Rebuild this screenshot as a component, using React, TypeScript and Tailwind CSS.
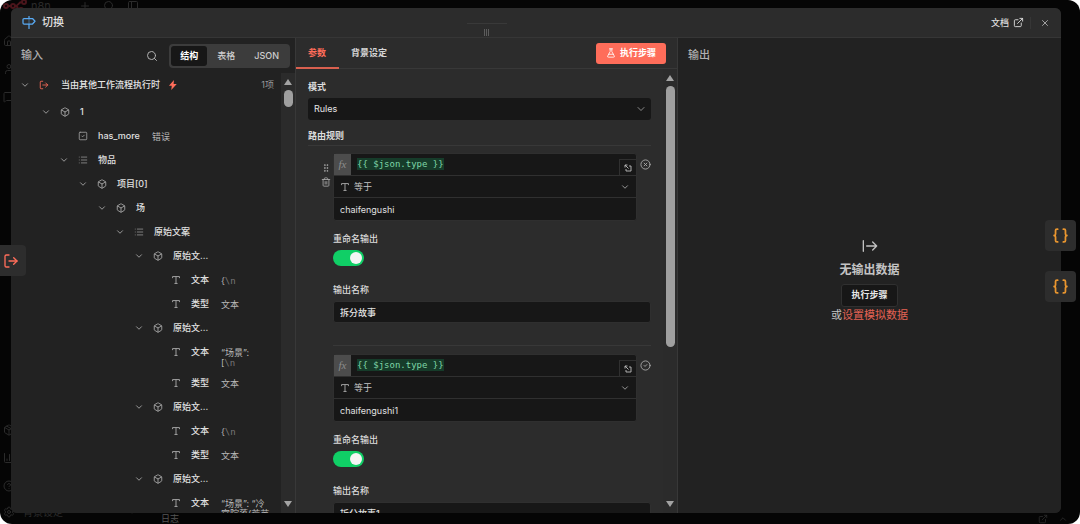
import { useState } from "react";
import type { ReactNode } from "react";
import {
  Box,
  Braces,
  ChartColumn,
  ChevronDown,
  ChevronUp,
  CircleCheck,
  CircleHelp,
  CircleX,
  ExternalLink,
  FlaskConical,
  GripVertical,
  House,
  List,
  LogOut,
  MessageSquare,
  Package,
  PanelLeft,
  Plus,
  Search,
  Settings,
  SquareCheck,
  Trash2,
  User,
  X,
} from "lucide-react";

type Kind = "object" | "list" | "bool" | "string";

type TreeRow = {
  level: number;
  kind: Kind;
  label: string;
  value?: ReactNode;
};

const escaped = <span className="font-['DejaVu_Sans_Mono'] text-[#777]">\n</span>;

const rows: TreeRow[] = [
  { level: 1, kind: "object", label: "1" },
  { level: 2, kind: "bool", label: "has_more", value: "错误" },
  { level: 2, kind: "list", label: "物品" },
  { level: 3, kind: "object", label: "项目[0]" },
  { level: 4, kind: "object", label: "场" },
  { level: 5, kind: "list", label: "原始文案" },
  { level: 6, kind: "object", label: "原始文..." },
  { level: 7, kind: "string", label: "文本", value: <>{"{"}{escaped}</> },
  { level: 7, kind: "string", label: "类型", value: "文本" },
  { level: 6, kind: "object", label: "原始文..." },
  { level: 7, kind: "string", label: "文本", value: <>“场景”:<br />[{escaped}</> },
  { level: 7, kind: "string", label: "类型", value: "文本" },
  { level: 6, kind: "object", label: "原始文..." },
  { level: 7, kind: "string", label: "文本", value: <>{"{"}{escaped}</> },
  { level: 7, kind: "string", label: "类型", value: "文本" },
  { level: 6, kind: "object", label: "原始文..." },
  { level: 7, kind: "string", label: "文本", value: <>“场景”: “冷<br />宫院落(荒芜</> },
];

const indents = [
  "pl-[6px]",
  "pl-[27px]",
  "pl-[45px]",
  "pl-[64px]",
  "pl-[83px]",
  "pl-[101px]",
  "pl-[120px]",
  "pl-[138px]",
];

function SignIcon() {
  return (
    <svg viewBox="0 0 28 26" className="h-[13px] w-[14px]" fill="none" stroke="#58a9f2" strokeWidth="2.5" strokeLinejoin="round" strokeLinecap="round">
      <path d="M14 1v4M14 16v9M4 5h17l5 5.500-5 5.500H4a2 2 0 0 1-2-2V7a2 2 0 0 1 2-2z" />
      <path d="M14 5v11" strokeWidth="1" />
    </svg>
  );
}

function TextIcon() {
  return (
    <svg viewBox="0 0 16 16" className="size-2.5 text-[#b0b0b0]" fill="none" stroke="currentColor" strokeWidth="1.4">
      <path d="M2.500 5V2.500h11V5M8 2.500v11M5.500 13.500h5" />
    </svg>
  );
}

function BoltIcon() {
  return (
    <svg viewBox="0 0 16 16" className="size-2.5" fill="#ff6d5a">
      <path d="M9.500 0 1.500 9h4.500l-.8 7L14 6.500H9z" />
    </svg>
  );
}

function OutIcon() {
  return (
    <svg viewBox="0 0 24 24" className="size-4" fill="none" stroke="#c2c2c2" strokeWidth="2" strokeLinecap="round" strokeLinejoin="round">
      <path d="M2 4v16M7 12h15M16 6l6 6-6 6" />
    </svg>
  );
}

function PopIcon() {
  return (
    <svg viewBox="0 0 16 16" className="size-2" fill="none" stroke="#c0c0c0" strokeWidth="1.800">
      <path d="M2 7V2h5M2 2l7 7M10 4h4v10H4v-4" />
    </svg>
  );
}

function KindIcon({ kind }: { kind: Kind }) {
  if (kind === "object") return <Box className="size-2.5 text-[#b0b0b0]" />;
  if (kind === "list") return <List className="size-2.5 text-[#909090]" />;
  if (kind === "bool") return <SquareCheck className="size-2.5 text-[#a0a0a0]" />;
  return <TextIcon />;
}

function Scrollbar({ thumb }: { thumb: string }) {
  return (
    <div className="flex w-[14px] shrink-0 flex-col items-center bg-[#2b2b2b] pt-[6px] pb-[6px]">
      <svg viewBox="0 0 8 6" className="h-[6px] w-2" fill="#a3a3a3">
        <path d="M4 0 8 6H0z" />
      </svg>
      <div className="mt-[5px] min-h-0 w-full flex-1 pr-[2px] pl-[3px]">
        <div className={`w-full rounded-full bg-[#9f9f9f] ${thumb}`} />
      </div>
      <svg viewBox="0 0 8 6" className="h-[6px] w-2" fill="#a3a3a3">
        <path d="M4 6 0 0h8z" />
      </svg>
    </div>
  );
}

function Node({ row }: { row: TreeRow }) {
  const leaf = row.kind === "string" || row.kind === "bool";
  return (
    <div className={`flex min-h-6 items-start ${indents[row.level]}`}>
      {!leaf && (
        <button aria-label="折叠" className="flex h-6 w-4 items-center justify-center">
          <ChevronDown className="size-2.5 text-[#b0b0b0]" />
        </button>
      )}
      <span className={`flex h-6 w-[14px] items-center justify-center ${leaf ? "ml-5" : "ml-1"}`}>
        <KindIcon kind={row.kind} />
      </span>
      <span className="ml-2 h-6 shrink-0 leading-6 font-medium text-[#e0e0e0]">{row.label}</span>
      {row.value && (
        <span className="ml-3 pt-2 pb-[3px] leading-[10px] whitespace-nowrap text-[#b8b8b8]">{row.value}</span>
      )}
    </div>
  );
}

function InputPanel() {
  const [view, setView] = useState("结构");
  return (
    <section className="flex min-h-0 min-w-0 flex-col bg-[#222]">
      <header className="flex h-[35px] shrink-0 items-center pr-[5px] pl-[10px]">
        <h2 className="text-[11px] font-medium text-[#b0b0b0]">输入</h2>
        <button aria-label="搜索" className="mr-[11px] ml-auto">
          <Search className="size-3 text-[#b0b0b0]" />
        </button>
        <div className="flex gap-px rounded bg-[#3c3c3c] p-0.5">
          {["结构", "表格", "JSON"].map((name) => (
            <button
              key={name}
              onClick={() => setView(name)}
              className={`h-5 rounded-[3px] px-[9px] ${view === name ? "bg-[#171717] font-bold text-white" : "font-medium text-[#cfcfcf]"}`}
            >
              {name}
            </button>
          ))}
        </div>
      </header>
      <div className="flex min-h-0 flex-1">
        <div className="min-w-0 flex-1 overflow-hidden">
          <div className="mb-1 flex h-[23px] items-center pr-[7px] pl-[6px]">
            <button aria-label="折叠" className="flex w-4 justify-center">
              <ChevronDown className="size-2.5 text-[#b0b0b0]" />
            </button>
            <LogOut className="ml-1.5 size-2.5 text-[#ff6d5a]" />
            <span className="mr-2 ml-3 font-medium text-[#e6e6e6]">当由其他工作流程执行时</span>
            <BoltIcon />
            <span className="ml-auto text-[#999]">1项</span>
          </div>
          {rows.map((row, i) => (
            <Node key={i} row={row} />
          ))}
        </div>
        <Scrollbar thumb="h-[17px]" />
      </div>
    </section>
  );
}

type RuleProps = { id: string; value: string; name: string; valid?: boolean; tools?: boolean };

function Rule({ id, value, name, valid, tools }: RuleProps) {
  const [rename, setRename] = useState(true);
  const Status = valid ? CircleCheck : CircleX;
  return (
    <div className="flex">
      <div className="flex w-[25px] shrink-0 flex-col items-center gap-1 pt-[10px] pl-2.5 text-[#a8a8a8]">
        {tools && (
          <>
            <GripVertical className="size-2.5" />
            <button aria-label="删除">
              <Trash2 className="size-2.5" />
            </button>
          </>
        )}
      </div>
      <div className="min-w-0 flex-1">
        <div className="flex">
          <div className="min-w-0 flex-1 rounded-[3px] border border-[#2f2f2f] bg-[#171717]">
            <div className="flex h-[22px] border-b border-[#303030]">
              <span className="flex w-[17px] items-center justify-center bg-[#4c4c4c] font-['Liberation_Serif'] text-[11px] text-[#8c8c8c] italic">fx</span>
              <div className="flex-1 pl-1.5 font-['DejaVu_Sans_Mono'] leading-[20px] text-[#7fd6a8]">
                <span className="bg-[#163c2a] py-px">{"{{ $json.type }}"}</span>
              </div>
              <button aria-label="展开" className="flex h-4 w-[17px] items-center justify-center self-end border-t border-l border-[#303030]">
                <PopIcon />
              </button>
            </div>
            <label className="flex h-[22px] items-center border-b border-[#303030] px-1.5">
              <TextIcon />
              <select aria-label="条件" className="ml-1 min-w-0 flex-1 appearance-none text-[#c4c4c4]">
                <option>等于</option>
              </select>
              <ChevronDown className="size-2.5 text-[#b0b0b0]" />
            </label>
            <input aria-label="值" defaultValue={value} className="block h-[22px] w-full px-1.5 text-[#e0e0e0]" />
          </div>
          <Status className="mt-1.5 ml-[3px] size-[11px] shrink-0 text-[#a8a8a8]" />
        </div>
        <label htmlFor={`${id}-rename`} className="mt-2.5 block h-4 leading-4 font-medium text-[#dcdcdc]">重命名输出</label>
        <input
          id={`${id}-rename`}
          type="checkbox"
          checked={rename}
          onChange={() => setRename(!rename)}
          className="mt-[3px] block h-4 w-[31px] appearance-none rounded-full bg-[#555] p-0.5 before:block before:size-3 before:rounded-full before:bg-[#f5f5f5] checked:bg-[#10cf66] checked:before:ml-auto"
        />
        <label htmlFor={`${id}-name`} className="mt-4 block h-4 leading-4 font-medium text-[#dcdcdc]">输出名称</label>
        <input
          id={`${id}-name`}
          defaultValue={name}
          className="mt-[3px] block h-[22px] w-full rounded-[3px] border border-[#2f2f2f] bg-[#171717] px-1.5 font-medium text-[#e0e0e0]"
        />
      </div>
    </div>
  );
}

function ParamsPanel() {
  return (
    <section className="relative flex min-h-0 min-w-0 flex-col border-x border-[#383838] bg-[#2c2c2c]">
      <div className="absolute -top-[15px] left-1/2 flex h-[15px] w-10 -translate-x-1/2 justify-center gap-px border-t border-[#393939] pt-[5px]">
        <span className="h-[7px] w-px bg-[#5c5c5c]" />
        <span className="h-[7px] w-px bg-[#5c5c5c]" />
        <span className="h-[7px] w-px bg-[#5c5c5c]" />
      </div>
      <header className="flex h-[31px] shrink-0 items-stretch border-b border-[#383838] pr-[11px]">
        <button className="-mb-px border-b-2 border-[#d9604f] pr-[13px] pl-3 font-bold text-[#ff6d5a]">参数</button>
        <button className="px-3 font-bold text-[#d6d6d6]">背景设定</button>
        <button className="ml-auto flex h-[21px] items-center gap-1 self-center rounded-[3px] bg-[#ff6d5a] px-2.5 font-bold text-white">
          <FlaskConical className="size-2.5" />
          执行步骤
        </button>
      </header>
      <div className="flex min-h-0 flex-1">
        <div className="min-w-0 flex-1 overflow-hidden pt-[10px] pr-3 pl-3">
          <label htmlFor="mode" className="block h-4 leading-4 font-bold text-[#dcdcdc]">模式</label>
          <div className="relative mt-[3px]">
            <select id="mode" className="block h-[22px] w-full appearance-none rounded-[3px] bg-[#171717] px-1.5 text-[#e6e6e6]">
              <option>Rules</option>
            </select>
            <ChevronDown strokeWidth={1.5} className="pointer-events-none absolute top-[5px] right-1 size-3 text-[#b0b0b0]" />
          </div>
          <h3 className="mt-2 h-[18px] border-b border-[#383838] leading-4 font-bold text-[#dcdcdc]">路由规则</h3>
          <div className="mt-[7px]">
            <Rule id="rule-1" value="chaifengushi" name="拆分故事" tools />
            <hr className="mt-[22px] mb-2 ml-[25px] border-[#383838]" />
            <Rule id="rule-2" value="chaifengushi1" name="拆分故事1" valid />
          </div>
        </div>
        <Scrollbar thumb="h-[63%]" />
      </div>
    </section>
  );
}

function OutputPanel() {
  return (
    <section className="flex min-h-0 min-w-0 flex-col bg-[#222]">
      <header className="flex h-[35px] shrink-0 items-center px-[10px]">
        <h2 className="text-[11px] font-medium text-[#b0b0b0]">输出</h2>
      </header>
      <div className="flex flex-1 flex-col items-center justify-center pb-[26px]">
        <OutIcon />
        <p className="mt-1.5 text-[12px] leading-5 font-bold text-[#c4c4c4]">无输出数据</p>
        <button className="mt-1 h-[23px] rounded-[3px] border border-[#303030] bg-[#171717] px-[9px] font-bold text-[#e6e6e6]">执行步骤</button>
        <p className="text-[11px] leading-4 text-[#c4c4c4]">
          或<a href="#mock" className="text-[#e56354]">设置模拟数据</a>
        </p>
      </div>
    </section>
  );
}

// Editor page dimmed behind the dialog
function Backdrop() {
  return (
    <div aria-hidden="true" className="absolute inset-0 flex flex-col justify-between text-[#2b2b2b]">
      <div className="flex h-[11px] items-center pl-[3px]">
        <svg viewBox="0 0 24 12" className="h-3 w-6" fill="none" stroke="#4a151b" strokeWidth="2">
          <circle cx="3" cy="6" r="2" />
          <circle cx="10" cy="6" r="2" />
          <circle cx="21" cy="2" r="2" />
          <circle cx="18" cy="10" r="2" />
          <path d="M5 6h3M12 6c4 0 3-4 7-4M12 6c4 0 2 4 4 4" />
        </svg>
        <span className="ml-1 text-[11px] leading-3">n8n</span>
        <Plus className="ml-7 size-3" />
        <Search className="ml-3 size-3" />
        <PanelLeft className="ml-3 size-3" />
      </div>
      <div className="flex flex-1 flex-col gap-4 pt-6 pl-[3px]">
        <House className="size-3" />
        <User className="size-3" />
        <MessageSquare className="size-3" />
        <Package className="mt-auto size-3" />
        <ChartColumn className="size-3" />
        <CircleHelp className="size-3" />
      </div>
      <div className="flex h-8 items-center pt-2 pl-[3px]">
        <Settings className="size-3" />
        <span className="ml-2 text-[10px] leading-3">背景设定</span>
        <ChevronDown className="ml-16 size-2.5" />
        <span className="ml-6 self-end leading-[10px] text-[#555]">日志</span>
        <ExternalLink className="ml-auto size-2.5 self-end" />
        <ChevronUp className="mr-3 ml-2.5 size-2.5 self-end" />
      </div>
    </div>
  );
}

export default function App() {
  return (
    <div className="h-screen bg-white font-[Inter,'Noto_Sans_CJK_SC',sans-serif] text-[9px]">
      <div className="relative h-full overflow-hidden rounded-xl bg-[#050505]">
        <Backdrop />
        <div className="relative h-full pt-2 pr-[19px] pb-[11px] pl-[11px]">
          <main role="dialog" className="flex h-full flex-col overflow-hidden rounded-md bg-[#222]">
            <header className="flex h-[30px] shrink-0 items-center border-b border-[#363636] bg-[#2c2c2c] px-[11px]">
              <SignIcon />
              <h1 className="ml-1.5 text-[11px] font-medium text-[#e0e0e0]">切换</h1>
              <a href="#docs" className="ml-auto flex items-center gap-1 font-medium text-[#dcdcdc]">
                文档
                <ExternalLink className="size-[11px]" />
              </a>
              <button aria-label="关闭" className="ml-1.5 flex h-3 w-[20px] items-center justify-end border-l border-[#363636]">
                <X className="size-2.5 text-[#b8b8b8]" />
              </button>
            </header>
            <div className="grid min-h-0 flex-1 grid-cols-[284fr_383fr_383fr] grid-rows-[minmax(0,1fr)]">
              <InputPanel />
              <ParamsPanel />
              <OutputPanel />
            </div>
          </main>
          <div className="absolute top-2 bottom-[11px] left-0 flex items-center">
            <button aria-label="输入节点" className="flex h-[31px] w-[26px] items-center rounded-r bg-[#2d2d2d] pl-[3px]">
              <LogOut className="size-4 text-[#ff6d5a]" />
            </button>
          </div>
          <div className="absolute top-2 right-1 bottom-[11px] flex flex-col justify-center gap-5">
            <button aria-label="输出节点 1" className="flex h-[31px] w-[31px] items-center justify-center rounded bg-[#2d2d2d]">
              <Braces strokeWidth={2.5} className="size-[17px] text-[#e8952f]" />
            </button>
            <button aria-label="输出节点 2" className="flex h-[31px] w-[31px] items-center justify-center rounded bg-[#2d2d2d]">
              <Braces strokeWidth={2.5} className="size-[17px] text-[#e8952f]" />
            </button>
          </div>
        </div>
      </div>
    </div>
  );
}
